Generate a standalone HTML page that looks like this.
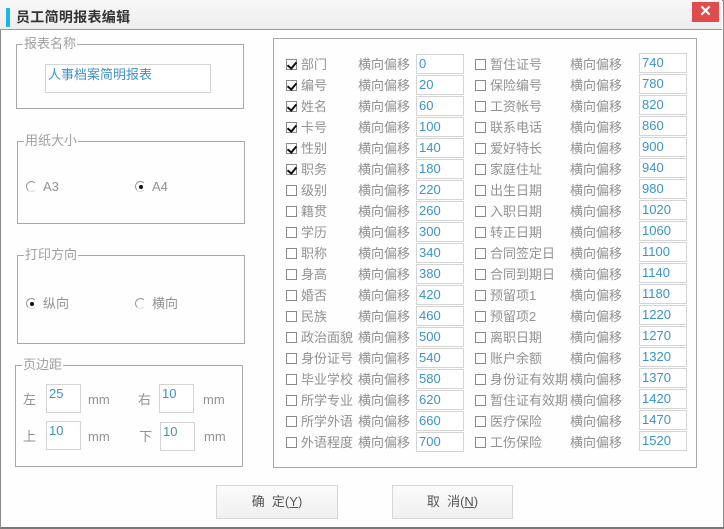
<!DOCTYPE html>
<html><head><meta charset="utf-8"><style>
*{margin:0;padding:0;box-sizing:border-box}
body{width:724px;height:529px;overflow:hidden;background:#fff;font-family:"Liberation Sans","Noto Sans CJK SC",sans-serif;font-size:13px;color:#929292;position:relative}
.win{position:absolute;left:0;top:0;width:724px;height:529px;border:1px solid #8c8c8c;border-bottom:2px solid #7a7a7a;background:#fefefe}
.title{position:absolute;left:0;top:0;width:722px;height:30px;background:linear-gradient(#f7f7f7,#eeeeee);border-bottom:1px solid #9a9a9a}
.title .bar{position:absolute;left:6px;top:8px;width:4px;height:19px;background:#1fb5e6}
.title .t{position:absolute;left:16px;top:7px;font-size:14px;color:#333;font-weight:bold;letter-spacing:0.3px}
.close{position:absolute;left:692px;top:2px;width:27px;height:20px;background:#e04c4c;color:#fff;font-size:15px;text-align:center;line-height:20px;font-weight:bold}
.grp{position:absolute;border:1px solid #a8a8a8}
.grp .lg{position:absolute;top:-10px;left:6px;background:#fefefe;color:#a0a0a0;font-size:13px;line-height:18px;padding:0 1px}
.inp{position:absolute;border:1px solid #d4d4d4;background:#fff;color:#3d93c8;font-size:13px;padding-left:2px;line-height:17px}
.abs{position:absolute;white-space:nowrap;line-height:20px}
.cb{display:inline-block;width:11px;height:11px;border:1px solid #8a8a8a;vertical-align:-1px;margin-right:4px;background:#fff;position:relative}
.cb.on::after{content:"";position:absolute;left:2px;top:0px;width:4px;height:7px;border:solid #111;border-width:0 2px 2px 0;transform:rotate(40deg)}
.rd{display:inline-block;width:11px;height:11px;border-radius:50%;border:1px solid #999;border-right-color:#fff;border-bottom-color:#ddd;vertical-align:-1px;margin-right:6px;position:relative}
.rd.on::after{content:"";position:absolute;left:3px;top:3px;width:4px;height:4px;border-radius:50%;background:#111}
.btn{position:absolute;border:1px solid #d6d6d6;background:linear-gradient(#fbfbfb,#f0f0f0);color:#555;text-align:center;line-height:31px;font-size:13px}
u{text-decoration:underline}
</style></head><body>
<div class="win"></div>
<div class="title"><div class="bar"></div><div class="t">员工简明报表编辑</div></div>
<div class="close">✕</div>

<div class="grp" style="left:16px;top:44px;width:228px;height:65px"><span class="lg">报表名称</span></div>
<div class="inp" style="left:45px;top:64px;width:166px;height:29px;line-height:20px">人事档案简明报表</div>

<div class="grp" style="left:17px;top:141px;width:228px;height:83px"><span class="lg">用纸大小</span></div>
<div class="abs" style="left:26px;top:177px"><span class="rd"></span>A3</div>
<div class="abs" style="left:135px;top:177px"><span class="rd on"></span>A4</div>

<div class="grp" style="left:17px;top:255px;width:228px;height:89px"><span class="lg">打印方向</span></div>
<div class="abs" style="left:26px;top:294px"><span class="rd on"></span>纵向</div>
<div class="abs" style="left:135px;top:294px"><span class="rd"></span>横向</div>

<div class="grp" style="left:15px;top:365px;width:228px;height:102px"><span class="lg">页边距</span></div>
<div class="abs" style="left:23px;top:390px">左</div>
<div class="inp" style="left:46px;top:384px;width:35px;height:29px">25</div>
<div class="abs" style="left:88px;top:390px">mm</div>
<div class="abs" style="left:138px;top:390px">右</div>
<div class="inp" style="left:159px;top:384px;width:35px;height:29px">10</div>
<div class="abs" style="left:203px;top:390px">mm</div>
<div class="abs" style="left:23px;top:427px">上</div>
<div class="inp" style="left:46px;top:421px;width:35px;height:29px">10</div>
<div class="abs" style="left:88px;top:427px">mm</div>
<div class="abs" style="left:139px;top:427px">下</div>
<div class="inp" style="left:160px;top:422px;width:35px;height:29px">10</div>
<div class="abs" style="left:204px;top:427px">mm</div>

<div class="grp" style="left:273px;top:38px;width:424px;height:430px"></div>

<div style="position:absolute;left:286px;top:55px">
<div class="abs" style="top:0"><span class="cb on"></span>部门</div>
<div class="abs" style="top:21px"><span class="cb on"></span>编号</div>
<div class="abs" style="top:42px"><span class="cb on"></span>姓名</div>
<div class="abs" style="top:63px"><span class="cb on"></span>卡号</div>
<div class="abs" style="top:84px"><span class="cb on"></span>性别</div>
<div class="abs" style="top:105px"><span class="cb on"></span>职务</div>
<div class="abs" style="top:126px"><span class="cb"></span>级别</div>
<div class="abs" style="top:147px"><span class="cb"></span>籍贯</div>
<div class="abs" style="top:168px"><span class="cb"></span>学历</div>
<div class="abs" style="top:189px"><span class="cb"></span>职称</div>
<div class="abs" style="top:210px"><span class="cb"></span>身高</div>
<div class="abs" style="top:231px"><span class="cb"></span>婚否</div>
<div class="abs" style="top:252px"><span class="cb"></span>民族</div>
<div class="abs" style="top:273px"><span class="cb"></span>政治面貌</div>
<div class="abs" style="top:294px"><span class="cb"></span>身份证号</div>
<div class="abs" style="top:315px"><span class="cb"></span>毕业学校</div>
<div class="abs" style="top:336px"><span class="cb"></span>所学专业</div>
<div class="abs" style="top:357px"><span class="cb"></span>所学外语</div>
<div class="abs" style="top:378px"><span class="cb"></span>外语程度</div>
</div>
<div style="position:absolute;left:358px;top:55px">
<div class="abs" style="top:0">横向偏移</div><div class="abs" style="top:21px">横向偏移</div><div class="abs" style="top:42px">横向偏移</div><div class="abs" style="top:63px">横向偏移</div><div class="abs" style="top:84px">横向偏移</div><div class="abs" style="top:105px">横向偏移</div><div class="abs" style="top:126px">横向偏移</div><div class="abs" style="top:147px">横向偏移</div><div class="abs" style="top:168px">横向偏移</div><div class="abs" style="top:189px">横向偏移</div><div class="abs" style="top:210px">横向偏移</div><div class="abs" style="top:231px">横向偏移</div><div class="abs" style="top:252px">横向偏移</div><div class="abs" style="top:273px">横向偏移</div><div class="abs" style="top:294px">横向偏移</div><div class="abs" style="top:315px">横向偏移</div><div class="abs" style="top:336px">横向偏移</div><div class="abs" style="top:357px">横向偏移</div><div class="abs" style="top:378px">横向偏移</div>
</div>
<div style="position:absolute;left:416px;top:54px">
<div class="inp" style="top:0;width:48px;height:20px">0</div>
<div class="inp" style="top:21px;width:48px;height:20px">20</div>
<div class="inp" style="top:42px;width:48px;height:20px">60</div>
<div class="inp" style="top:63px;width:48px;height:20px">100</div>
<div class="inp" style="top:84px;width:48px;height:20px">140</div>
<div class="inp" style="top:105px;width:48px;height:20px">180</div>
<div class="inp" style="top:126px;width:48px;height:20px">220</div>
<div class="inp" style="top:147px;width:48px;height:20px">260</div>
<div class="inp" style="top:168px;width:48px;height:20px">300</div>
<div class="inp" style="top:189px;width:48px;height:20px">340</div>
<div class="inp" style="top:210px;width:48px;height:20px">380</div>
<div class="inp" style="top:231px;width:48px;height:20px">420</div>
<div class="inp" style="top:252px;width:48px;height:20px">460</div>
<div class="inp" style="top:273px;width:48px;height:20px">500</div>
<div class="inp" style="top:294px;width:48px;height:20px">540</div>
<div class="inp" style="top:315px;width:48px;height:20px">580</div>
<div class="inp" style="top:336px;width:48px;height:20px">620</div>
<div class="inp" style="top:357px;width:48px;height:20px">660</div>
<div class="inp" style="top:378px;width:48px;height:20px">700</div>
</div>

<div style="position:absolute;left:475px;top:55px">
<div class="abs" style="top:0"><span class="cb"></span>暂住证号</div>
<div class="abs" style="top:21px"><span class="cb"></span>保险编号</div>
<div class="abs" style="top:42px"><span class="cb"></span>工资帐号</div>
<div class="abs" style="top:63px"><span class="cb"></span>联系电话</div>
<div class="abs" style="top:84px"><span class="cb"></span>爱好特长</div>
<div class="abs" style="top:105px"><span class="cb"></span>家庭住址</div>
<div class="abs" style="top:126px"><span class="cb"></span>出生日期</div>
<div class="abs" style="top:147px"><span class="cb"></span>入职日期</div>
<div class="abs" style="top:168px"><span class="cb"></span>转正日期</div>
<div class="abs" style="top:189px"><span class="cb"></span>合同签定日</div>
<div class="abs" style="top:210px"><span class="cb"></span>合同到期日</div>
<div class="abs" style="top:231px"><span class="cb"></span>预留项1</div>
<div class="abs" style="top:252px"><span class="cb"></span>预留项2</div>
<div class="abs" style="top:273px"><span class="cb"></span>离职日期</div>
<div class="abs" style="top:294px"><span class="cb"></span>账户余额</div>
<div class="abs" style="top:315px"><span class="cb"></span>身份证有效期</div>
<div class="abs" style="top:336px"><span class="cb"></span>暂住证有效期</div>
<div class="abs" style="top:357px"><span class="cb"></span>医疗保险</div>
<div class="abs" style="top:378px"><span class="cb"></span>工伤保险</div>
</div>
<div style="position:absolute;left:570px;top:55px">
<div class="abs" style="top:0">横向偏移</div><div class="abs" style="top:21px">横向偏移</div><div class="abs" style="top:42px">横向偏移</div><div class="abs" style="top:63px">横向偏移</div><div class="abs" style="top:84px">横向偏移</div><div class="abs" style="top:105px">横向偏移</div><div class="abs" style="top:126px">横向偏移</div><div class="abs" style="top:147px">横向偏移</div><div class="abs" style="top:168px">横向偏移</div><div class="abs" style="top:189px">横向偏移</div><div class="abs" style="top:210px">横向偏移</div><div class="abs" style="top:231px">横向偏移</div><div class="abs" style="top:252px">横向偏移</div><div class="abs" style="top:273px">横向偏移</div><div class="abs" style="top:294px">横向偏移</div><div class="abs" style="top:315px">横向偏移</div><div class="abs" style="top:336px">横向偏移</div><div class="abs" style="top:357px">横向偏移</div><div class="abs" style="top:378px">横向偏移</div>
</div>
<div style="position:absolute;left:639px;top:53px">
<div class="inp" style="top:0;width:48px;height:20px">740</div>
<div class="inp" style="top:21px;width:48px;height:20px">780</div>
<div class="inp" style="top:42px;width:48px;height:20px">820</div>
<div class="inp" style="top:63px;width:48px;height:20px">860</div>
<div class="inp" style="top:84px;width:48px;height:20px">900</div>
<div class="inp" style="top:105px;width:48px;height:20px">940</div>
<div class="inp" style="top:126px;width:48px;height:20px">980</div>
<div class="inp" style="top:147px;width:48px;height:20px">1020</div>
<div class="inp" style="top:168px;width:48px;height:20px">1060</div>
<div class="inp" style="top:189px;width:48px;height:20px">1100</div>
<div class="inp" style="top:210px;width:48px;height:20px">1140</div>
<div class="inp" style="top:231px;width:48px;height:20px">1180</div>
<div class="inp" style="top:252px;width:48px;height:20px">1220</div>
<div class="inp" style="top:273px;width:48px;height:20px">1270</div>
<div class="inp" style="top:294px;width:48px;height:20px">1320</div>
<div class="inp" style="top:315px;width:48px;height:20px">1370</div>
<div class="inp" style="top:336px;width:48px;height:20px">1420</div>
<div class="inp" style="top:357px;width:48px;height:20px">1470</div>
<div class="inp" style="top:378px;width:48px;height:20px">1520</div>
</div>

<div class="btn" style="left:216px;top:485px;width:122px;height:34px">确&nbsp;&nbsp;定(<u>Y</u>)</div>
<div class="btn" style="left:392px;top:485px;width:121px;height:34px">取&nbsp;&nbsp;消(<u>N</u>)</div>
</body></html>
